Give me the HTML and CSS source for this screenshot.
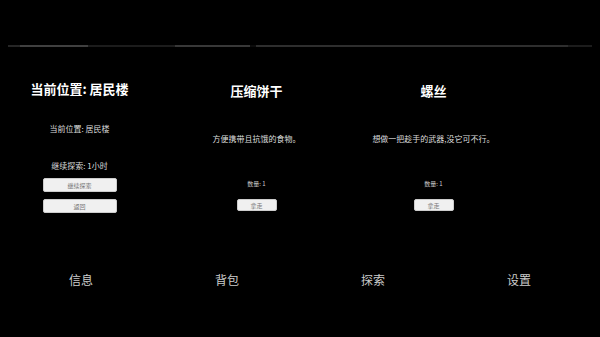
FILE: index.html
```html
<!DOCTYPE html>
<html lang="zh">
<head>
  <meta charset="UTF-8">
  <meta name="viewport" content="width=device-width, initial-scale=1.0">
  <link rel="stylesheet" href="styles.css">
</head>
<body>

<div class="track"></div>

<div class="panels">
  <div class="panel panel-place">
    <h2 class="title">当前位置: 居民楼</h2>
    <p class="info">当前位置: 居民楼</p>
    <p class="info info-time">继续探索: 1小时</p>
    <button class="btn btn-wide">继续探索</button>
    <button class="btn btn-wide">返回</button>
  </div>

  <div class="panel panel-item">
    <h2 class="title">压缩饼干</h2>
    <p class="desc">方便携带且抗饿的食物。</p>
    <p class="count">数量: 1</p>
    <button class="btn">拿走</button>
  </div>

  <div class="panel panel-item">
    <h2 class="title">螺丝</h2>
    <p class="desc">想做一把趁手的武器,没它可不行。</p>
    <p class="count">数量: 1</p>
    <button class="btn">拿走</button>
  </div>
</div>

<div class="nav">
  <div class="nav-item">信息</div>
  <div class="nav-item">背包</div>
  <div class="nav-item">探索</div>
  <div class="nav-item">设置</div>
</div>

</body>
</html>
```

FILE: styles.css
```css
body {
  margin: 8px;
  background-color: #000;
  color: #fff;
  font-family: "Noto Sans CJK SC", "Noto Sans", sans-serif;
}

/* thin bar across the very top */
.track {
  height: 2px;
  margin: 37px -8px 0;
  background: linear-gradient(to right,
    #262626 0, #262626 20px,
    #404040 20px, #404040 88px,
    #1c1c1c 88px, #1c1c1c 175px,
    #383838 175px, #383838 250px,
    #0c0c0c 250px, #0c0c0c 256px,
    #2e2e2e 256px, #2e2e2e 568px,
    #1c1c1c 568px);
}

.panels {
  display: flex;
  margin-left: -17px;
  height: 179px;
}

.panel {
  width: 177px;
  display: flex;
  flex-direction: column;
  align-items: center;
}

.panel-place {
  padding-top: 34px;
}

.panel-item {
  padding-top: 36px;
}

.title {
  margin: 0;
  font-size: 13px;
  line-height: 16px;
  font-weight: bold;
}

.info {
  margin: 27px 0 0;
  font-size: 8px;
  line-height: 10px;
  color: #ddd;
}

.info-time {
  margin-top: 27px;
  margin-bottom: 7px;
}

.desc {
  margin: 35px 0 0;
  font-size: 8px;
  line-height: 10px;
  color: #ddd;
}

.count {
  margin: 36px 0 0;
  font-size: 6px;
  line-height: 8px;
  color: #ccc;
}

.btn {
  margin-top: 11px;
  width: 40px;
  height: 12px;
  padding: 0;
  background-color: #f0f0f0;
  border: 1px solid #ccc;
  border-radius: 2px;
  font-family: inherit;
  font-size: 6px;
  color: #777;
}

.btn-wide {
  width: 74px;
  height: 14px;
  margin-top: 0;
  margin-bottom: 7px;
}

.nav {
  display: flex;
  margin-top: 46px;
}

.nav-item {
  flex: 1;
  text-align: center;
  font-size: 12px;
  line-height: 16px;
  color: #ccc;
}
```
